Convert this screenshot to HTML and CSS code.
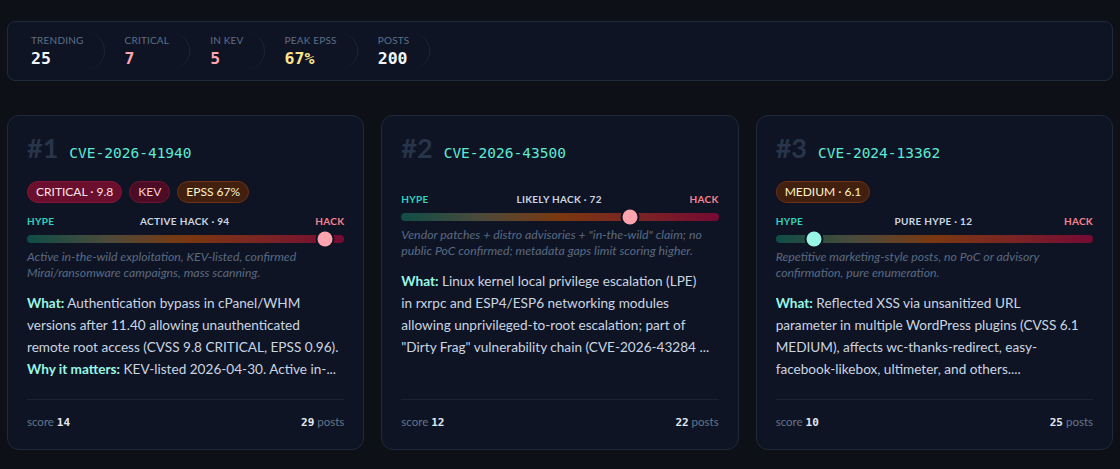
FILE: index.html
```html
<!DOCTYPE html>
<html lang="en">
<head>
  <meta charset="UTF-8" />
  <meta name="viewport" content="width=device-width, initial-scale=1.0" />
  <title>Hype vs Hack - Trending CVEs</title>
  <link rel="stylesheet" href="styles.css">
</head>
<body>
  <div class="page">
    <div class="stats">
      <div class="stat">
        <div class="stat-label">Trending</div>
        <div class="stat-value">25</div>
      </div>
      <div class="stat">
        <div class="stat-label">Critical</div>
        <div class="stat-value crit">7</div>
      </div>
      <div class="stat">
        <div class="stat-label">In KEV</div>
        <div class="stat-value crit">5</div>
      </div>
      <div class="stat">
        <div class="stat-label">Peak EPSS</div>
        <div class="stat-value warn">67%</div>
      </div>
      <div class="stat">
        <div class="stat-label">Posts</div>
        <div class="stat-value">200</div>
      </div>
    </div>

    <div class="cards">
      <div class="card">
        <div class="card-head">
          <span class="rank">#1</span>
          <span class="cve">CVE-2026-41940</span>
        </div>
        <div class="badges">
          <span class="badge critical">CRITICAL · 9.8</span>
          <span class="badge kev">KEV</span>
          <span class="badge epss">EPSS 67%</span>
        </div>
        <div class="meter">
          <div class="meter-labels">
            <span class="hype">Hype</span>
            <span class="verdict">Active hack · 94</span>
            <span class="hack">Hack</span>
          </div>
          <div class="track">
            <span class="knob hot" style="left: 94%"></span>
          </div>
          <p class="note">Active in-the-wild exploitation, KEV-listed, confirmed Mirai/ransomware campaigns, mass scanning.</p>
        </div>
        <p class="summary"><b>What:</b> Authentication bypass in cPanel/WHM versions after 11.40 allowing unauthenticated remote root access (CVSS 9.8 CRITICAL, EPSS 0.96).<br><b>Why it matters:</b> KEV-listed 2026-04-30. Active in-...</p>
        <div class="card-foot">
          <span>score <b>14</b></span>
          <span><b>29</b> posts</span>
        </div>
      </div>

      <div class="card">
        <div class="card-head">
          <span class="rank">#2</span>
          <span class="cve">CVE-2026-43500</span>
        </div>
        <div class="badges"></div>
        <div class="meter">
          <div class="meter-labels">
            <span class="hype">Hype</span>
            <span class="verdict">Likely hack · 72</span>
            <span class="hack">Hack</span>
          </div>
          <div class="track">
            <span class="knob hot" style="left: 72%"></span>
          </div>
          <p class="note">Vendor patches + distro advisories + "in-the-wild" claim; no public PoC confirmed; metadata gaps limit scoring higher.</p>
        </div>
        <p class="summary"><b>What:</b> Linux kernel local privilege escalation (LPE)<br>in rxrpc and ESP4/ESP6 networking modules<br>allowing unprivileged-to-root escalation; part of<br>"Dirty Frag" vulnerability chain (CVE-2026-43284 ...</p>
        <div class="card-foot">
          <span>score <b>12</b></span>
          <span><b>22</b> posts</span>
        </div>
      </div>

      <div class="card">
        <div class="card-head">
          <span class="rank">#3</span>
          <span class="cve">CVE-2024-13362</span>
        </div>
        <div class="badges">
          <span class="badge medium">MEDIUM · 6.1</span>
        </div>
        <div class="meter">
          <div class="meter-labels">
            <span class="hype">Hype</span>
            <span class="verdict">Pure hype · 12</span>
            <span class="hack">Hack</span>
          </div>
          <div class="track">
            <span class="knob cool" style="left: 12%"></span>
          </div>
          <p class="note">Repetitive marketing-style posts, no PoC or advisory confirmation, pure enumeration.</p>
        </div>
        <p class="summary"><b>What:</b> Reflected XSS via unsanitized URL<br>parameter in multiple WordPress plugins (CVSS 6.1<br>MEDIUM), affects wc-thanks-redirect, easy-<br>facebook-likebox, ultimeter, and others....</p>
        <div class="card-foot">
          <span>score <b>10</b></span>
          <span><b>25</b> posts</span>
        </div>
      </div>
    </div>
  </div>
</body>
</html>
```

FILE: styles.css
```css
:root {
  --bg: #0d1016;
  --card-bg: #0e1424;
  --border: #1f2a3b;
  --muted: #64748b;
  --text: #cbd5e1;
  --teal: #5eead4;
  --mint: #99f6e4;
  --pink: #fda4af;
  --mono: "DejaVu Sans Mono", "Liberation Mono", monospace;
}

* {
  box-sizing: border-box;
}

body {
  margin: 0;
  background-color: var(--bg);
  color: var(--text);
  font-family: Lato, "Noto Sans", sans-serif;
}

.page {
  padding: 21px 7px;
}

/* top stats strip */
.stats {
  display: flex;
  gap: 20px;
  padding: 11px 23px;
  background-color: var(--card-bg);
  border: 1px solid var(--border);
  border-radius: 8px;
}

.stat {
  padding-right: 20px;
  border-right: 1px solid #1b2536;
  border-radius: 0 20px 20px 0;
}

.stat-label {
  font-size: 10px;
  line-height: 14px;
  letter-spacing: 0.2px;
  text-transform: uppercase;
  color: #5f6f87;
}

.stat-value {
  margin-top: 2px;
  font-family: var(--mono);
  font-size: 16.5px;
  line-height: 20px;
  font-weight: 700;
  color: #f1f5f9;
}

.stat-value.crit {
  color: var(--pink);
}

.stat-value.warn {
  color: #fde68a;
}

/* cards */
.cards {
  display: grid;
  grid-template-columns: repeat(3, 1fr);
  gap: 17px;
  margin-top: 34px;
}

.card {
  display: flex;
  flex-direction: column;
  gap: 14px;
  padding: 18px 19px 18px;
  background-color: var(--card-bg);
  border: 1px solid var(--border);
  border-radius: 12px;
}

.card-head {
  display: flex;
  align-items: baseline;
  gap: 11px;
  line-height: 28px;
}

.rank {
  font-size: 27px;
  font-weight: 700;
  color: #28344a;
}

.cve {
  font-family: var(--mono);
  font-size: 14.5px;
  color: var(--teal);
}

.badges {
  display: flex;
  gap: 7px;
}

.badge {
  padding: 0 8px;
  font-size: 12px;
  line-height: 20px;
  border: 1px solid;
  border-radius: 999px;
}

.badge.critical {
  background-color: #6a0f2d;
  border-color: #861337;
  color: #fde2e6;
}

.badge.kev {
  background-color: #4c0d24;
  border-color: #6e1432;
  color: #fecdd3;
}

.badge.epss,
.badge.medium {
  background-color: #41200f;
  border-color: #6e3111;
  color: #fef3c7;
}

.meter {
  margin-top: -2px;
}

.meter-labels {
  display: flex;
  justify-content: space-between;
  font-size: 10px;
  line-height: 12px;
  font-weight: 700;
  letter-spacing: 0.3px;
  text-transform: uppercase;
}

.hype {
  color: #2dd4bf;
}

.verdict {
  color: #cbd5e1;
}

.hack {
  color: #f6838f;
}

.track {
  position: relative;
  height: 8px;
  margin-top: 8px;
  border-radius: 4px;
  background: linear-gradient(90deg, #0f4d47 0%, #4b4a3a 25%, #7a3810 50%, #7a2424 75%, #760a33 100%);
}

.knob {
  position: absolute;
  top: 50%;
  width: 15px;
  height: 15px;
  border-radius: 50%;
  transform: translate(-50%, -50%);
  box-shadow: 0 0 0 2px #0e1424;
}

.knob.hot {
  background-color: var(--pink);
}

.knob.cool {
  background-color: var(--mint);
}

.note {
  margin: 6px 0 0;
  font-size: 12.3px;
  line-height: 16px;
  font-style: italic;
  color: #5a6a82;
}

.summary {
  margin: -3px 0 5px;
  font-size: 13.6px;
  line-height: 22px;
  color: var(--text);
  display: -webkit-box;
  -webkit-line-clamp: 4;
  -webkit-box-orient: vertical;
  overflow: hidden;
}

.summary b {
  color: var(--mint);
}

.card-foot {
  display: flex;
  justify-content: space-between;
  margin-top: auto;
  padding-top: 14px;
  border-top: 1px solid #1a2332;
  font-size: 11.5px;
  line-height: 16px;
  color: var(--muted);
}

.card-foot b {
  font-family: var(--mono);
  font-size: 11px;
  color: #e2e8f0;
}
```
